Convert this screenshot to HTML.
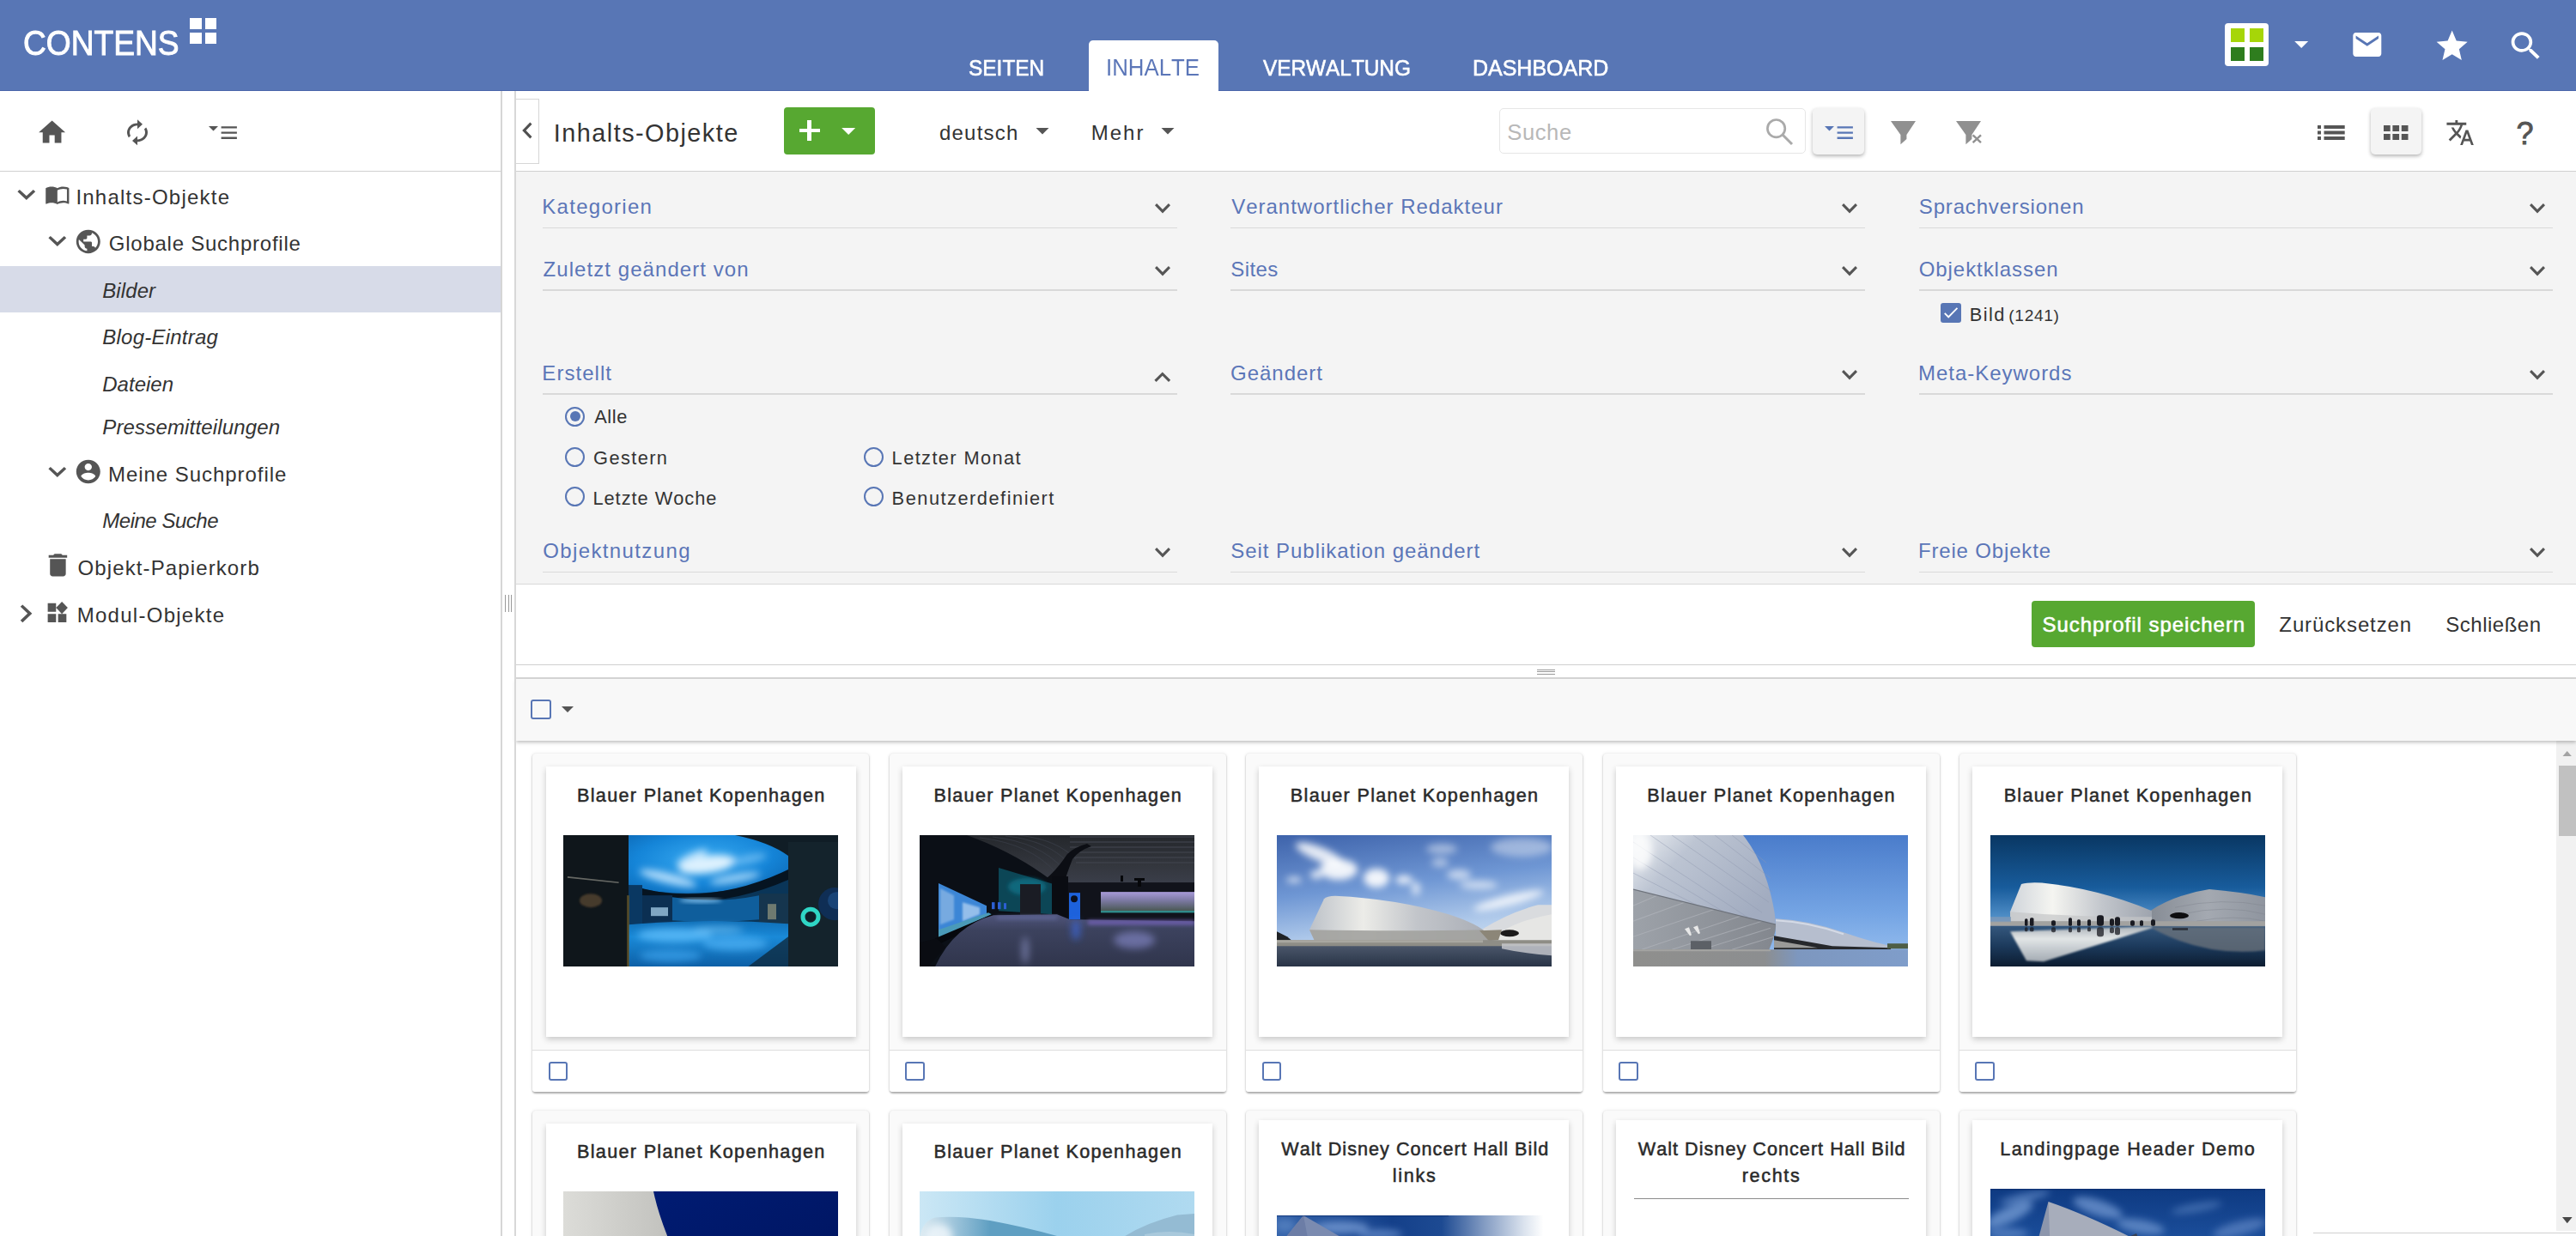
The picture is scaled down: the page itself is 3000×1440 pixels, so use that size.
<!DOCTYPE html>
<html lang="de"><head><meta charset="utf-8"><title>CONTENS</title>
<style>
html,body{margin:0;padding:0;}
body{width:3000px;height:1440px;overflow:hidden;position:relative;background:#fff;font-family:"Liberation Sans",sans-serif;}
body div, body svg{position:absolute;}
.t{white-space:nowrap;font-kerning:none;}
.c{text-align:center;}
</style></head><body>
<svg style="left:0;top:0;width:0;height:0" width="0" height="0"><defs>
<filter id="b1" x="-20%" y="-20%" width="140%" height="140%"><feGaussianBlur stdDeviation="1"/></filter>
<filter id="b2" x="-30%" y="-30%" width="160%" height="160%"><feGaussianBlur stdDeviation="2"/></filter>
<filter id="b4" x="-50%" y="-50%" width="200%" height="200%"><feGaussianBlur stdDeviation="4"/></filter>
<filter id="b7" x="-60%" y="-60%" width="220%" height="220%"><feGaussianBlur stdDeviation="7"/></filter>
<linearGradient id="i1floor" x1="0" y1="0" x2="0" y2="1"><stop offset="0" stop-color="#0f6fb8"/><stop offset=".35" stop-color="#1a8ad8"/><stop offset="1" stop-color="#0d5fa6"/></linearGradient>
<radialGradient id="i1ceil" cx=".5" cy=".55" r=".6"><stop offset="0" stop-color="#36a8f0"/><stop offset=".55" stop-color="#1585d8"/><stop offset="1" stop-color="#0a62ae"/></radialGradient>
<linearGradient id="i2floor" x1="0" y1="0" x2="0" y2="1"><stop offset="0" stop-color="#50557c"/><stop offset=".3" stop-color="#3c425e"/><stop offset="1" stop-color="#30354c"/></linearGradient>
<linearGradient id="i2aq" x1="0" y1="0" x2="0" y2="1"><stop offset="0" stop-color="#a89ad8"/><stop offset=".45" stop-color="#7a78a0"/><stop offset="1" stop-color="#46564e"/></linearGradient>
<linearGradient id="i2ceil" x1="0" y1="0" x2="0" y2="1"><stop offset="0" stop-color="#24272c"/><stop offset=".6" stop-color="#33363d"/><stop offset="1" stop-color="#3b3f4b"/></linearGradient>
<linearGradient id="i3sky" x1="0" y1="0" x2=".25" y2="1"><stop offset="0" stop-color="#3e63ab"/><stop offset=".45" stop-color="#6f97d4"/><stop offset=".8" stop-color="#b4cdec"/><stop offset="1" stop-color="#d2e0f2"/></linearGradient>
<linearGradient id="i3b" x1="0" y1="0" x2="1" y2="0"><stop offset="0" stop-color="#bcc1c8"/><stop offset=".3" stop-color="#ecece8"/><stop offset=".6" stop-color="#c2c5ca"/><stop offset="1" stop-color="#a9adb5"/></linearGradient>
<linearGradient id="i3w" x1="0" y1="0" x2="0" y2="1"><stop offset="0" stop-color="#4a566a"/><stop offset="1" stop-color="#283346"/></linearGradient>
<linearGradient id="i4sky" x1="0" y1="0" x2="0" y2="1"><stop offset="0" stop-color="#4a7ccb"/><stop offset=".6" stop-color="#75a5e4"/><stop offset="1" stop-color="#9cc2f0"/></linearGradient>
<linearGradient id="i4dome" x1="0" y1="0" x2="1" y2=".6"><stop offset="0" stop-color="#eef1f4"/><stop offset=".35" stop-color="#bcc4d2"/><stop offset="1" stop-color="#a2acc0"/></linearGradient>
<linearGradient id="i4band" x1="0" y1="0" x2="1" y2="0"><stop offset="0" stop-color="#9da2a9"/><stop offset="1" stop-color="#83878e"/></linearGradient>
<linearGradient id="i4base" x1="0" y1="0" x2="1" y2="0"><stop offset="0" stop-color="#8f8f8d"/><stop offset=".48" stop-color="#8c8e90"/><stop offset=".6" stop-color="#7d97bf"/><stop offset="1" stop-color="#7f9dca"/></linearGradient>
<linearGradient id="i5sky" x1="0" y1="0" x2="0" y2="1"><stop offset="0" stop-color="#093763"/><stop offset=".4" stop-color="#185c9c"/><stop offset=".68" stop-color="#5e9bd2"/><stop offset="1" stop-color="#5e9bd2"/></linearGradient>
<linearGradient id="i5b" x1="0" y1="0" x2="1" y2="0"><stop offset="0" stop-color="#cfd4da"/><stop offset=".3" stop-color="#f5f5f1"/><stop offset=".65" stop-color="#c2c6cc"/><stop offset="1" stop-color="#9ea4ae"/></linearGradient>
<linearGradient id="i5w" x1="0" y1="0" x2="0" y2="1"><stop offset="0" stop-color="#35587e"/><stop offset=".5" stop-color="#1c3a5c"/><stop offset="1" stop-color="#0c1c30"/></linearGradient>
<linearGradient id="i5r" x1="0" y1="0" x2="1" y2="0"><stop offset="0" stop-color="#868c95"/><stop offset=".5" stop-color="#a4a9b1"/><stop offset="1" stop-color="#8f959f"/></linearGradient>
<linearGradient id="i5refl" x1="0" y1="0" x2="0" y2="1"><stop offset="0" stop-color="#b9bdc0" stop-opacity=".9"/><stop offset=".35" stop-color="#eceeed" stop-opacity=".95"/><stop offset="1" stop-color="#c9cdd0" stop-opacity=".8"/></linearGradient>
<linearGradient id="i6g" x1="0" y1="0" x2="1" y2="0"><stop offset="0" stop-color="#dcdcd8"/><stop offset=".7" stop-color="#c4c4c0"/><stop offset="1" stop-color="#a2a2a0"/></linearGradient>
<linearGradient id="i6b" x1="0" y1="0" x2="1" y2="1"><stop offset="0" stop-color="#001d78"/><stop offset="1" stop-color="#00135a"/></linearGradient>
<linearGradient id="i7sky" x1="0" y1="0" x2="1" y2="0"><stop offset="0" stop-color="#cbe7f5"/><stop offset=".5" stop-color="#9bd1ed"/><stop offset="1" stop-color="#b0daf0"/></linearGradient>
<linearGradient id="i7b" x1="0" y1="0" x2="1" y2="0"><stop offset="0" stop-color="#dcebf2"/><stop offset=".2" stop-color="#a9cbdf"/><stop offset=".5" stop-color="#5f9fc2"/><stop offset="1" stop-color="#5f9fc2"/></linearGradient>
<linearGradient id="i8g" x1="0" y1="0" x2="1" y2="0"><stop offset="0" stop-color="#3463aa"/><stop offset=".42" stop-color="#14408a"/><stop offset=".6" stop-color="#1d4a92"/><stop offset=".75" stop-color="#8099c1"/><stop offset=".9" stop-color="#dbe3ee"/><stop offset=".97" stop-color="#ffffff"/></linearGradient>
<linearGradient id="i10sky" x1="0" y1="0" x2="0" y2="1"><stop offset="0" stop-color="#0e3a82"/><stop offset=".4" stop-color="#1c4f9c"/><stop offset="1" stop-color="#2c62ac"/></linearGradient>
</defs></svg>
<div style="left:0px;top:0px;width:3000px;height:106.2px;background:#5876b5;border-bottom:1.2px solid #4a65aa;box-sizing:border-box;"></div>
<div class="t" style="left:27.00px;top:26.37px;font-size:40.5px;line-height:48.6px;color:#fff;font-weight:400;letter-spacing:0.000px;-webkit-text-stroke:0.97px #fff;transform:scaleX(0.9167);transform-origin:0 0;">CONTENS</div>
<div style="left:221px;top:20.5px;width:13.5px;height:13px;background:#fff;"></div>
<div style="left:238.5px;top:20.5px;width:13.5px;height:13px;background:#fff;"></div>
<div style="left:221px;top:37.5px;width:13.5px;height:13px;background:#fff;"></div>
<div style="left:238.5px;top:37.5px;width:13.5px;height:13px;background:#fff;"></div>
<div style="left:1268px;top:47px;width:150.6px;height:60px;background:#fff;border-radius:5px 5px 0 0;"></div>
<div class="t" style="left:1128.21px;top:63.52px;font-size:26.5px;line-height:31.8px;color:#fff;font-weight:400;letter-spacing:0.000px;-webkit-text-stroke:0.64px #fff;transform:scaleX(0.9222);transform-origin:0 0;">SEITEN</div>
<div class="t" style="left:1288.12px;top:63.43px;font-size:26.8px;line-height:32.16px;color:#5b76b8;font-weight:400;letter-spacing:0.000px;transform:scaleX(0.9630);transform-origin:0 0;">INHALTE</div>
<div class="t" style="left:1471.21px;top:63.52px;font-size:26.5px;line-height:31.8px;color:#fff;font-weight:400;letter-spacing:0.000px;-webkit-text-stroke:0.64px #fff;transform:scaleX(0.9193);transform-origin:0 0;">VERWALTUNG</div>
<div class="t" style="left:1715.27px;top:63.52px;font-size:26.5px;line-height:31.8px;color:#fff;font-weight:400;letter-spacing:0.000px;-webkit-text-stroke:0.64px #fff;transform:scaleX(0.9425);transform-origin:0 0;">DASHBOARD</div>
<div style="left:2591px;top:26.5px;width:50.5px;height:50.5px;background:#fff;border-radius:4px;"></div>
<div style="left:2598px;top:33px;width:16px;height:16px;background:#a6d608;"></div>
<div style="left:2620px;top:33px;width:16px;height:16px;background:#a6d608;"></div>
<div style="left:2598px;top:55px;width:16px;height:16px;background:#2e7d1e;"></div>
<div style="left:2620px;top:55px;width:16px;height:16px;background:#2e7d1e;"></div>
<svg style="left:2660.80px;top:32.00px;width:38.40px;height:38.40px;" viewBox="0 0 24 24" preserveAspectRatio="none"><path fill="#fff" d="M7 10l5 5 5-5z" /></svg>
<svg style="left:2736.50px;top:31.00px;width:39.60px;height:42.00px;" viewBox="0 0 24 24" preserveAspectRatio="none"><path fill="#fff" d="M20 4H4c-1.1 0-1.99.9-1.99 2L2 18c0 1.1.9 2 2 2h16c1.1 0 2-.9 2-2V6c0-1.1-.9-2-2-2zm0 4l-8 5-8-5V6l8 5 8-5v2z" /></svg>
<svg style="left:2834.09px;top:32.09px;width:43.32px;height:43.33px;" viewBox="0 0 24 24" preserveAspectRatio="none"><path fill="#fff" d="M12 17.27L18.18 21l-1.64-7.03L22 9.24l-7.19-.61L12 2 9.19 8.63 2 9.24l5.46 4.73L5.82 21z" /></svg>
<svg style="left:2919.34px;top:32.33px;width:45.28px;height:42.95px;" viewBox="0 0 24 24" preserveAspectRatio="none"><path fill="#fff" d="M15.5 14h-.79l-.28-.27C15.41 12.59 16 11.11 16 9.5 16 5.91 13.09 3 9.5 3S3 5.91 3 9.5 5.91 16 9.5 16c1.61 0 3.09-.59 4.23-1.57l.27.28v.79l5 4.99L20.49 19l-4.99-5zm-6 0C7.01 14 5 11.99 5 9.5S7.01 5 9.5 5 14 7.01 14 9.5 11.99 14 9.5 14z" /></svg>
<div style="left:0px;top:106px;width:584px;height:1334px;background:#fff;"></div>
<div style="left:583.2px;top:106.2px;width:1.5px;height:1334px;background:#d6d6d6;"></div>
<div style="left:0px;top:198.5px;width:584px;height:1.5px;background:#d0d0d0;"></div>
<svg style="left:42.30px;top:136.41px;width:37.20px;height:36.71px;" viewBox="0 0 24 24" preserveAspectRatio="none"><path fill="#555" d="M10 20v-6h4v6h5v-8h3L12 3 2 12h3v8z" /></svg>
<svg style="left:142.00px;top:137.64px;width:36.00px;height:32.73px;" viewBox="0 0 24 24" preserveAspectRatio="none"><path fill="#555" d="M12 6v3l4-4-4-4v3c-4.42 0-8 3.58-8 8 0 1.57.46 3.03 1.24 4.26L6.7 14.8c-.45-.83-.7-1.79-.7-2.8 0-3.31 2.69-6 6-6zm6.76 1.74L17.3 9.2c.44.84.7 1.79.7 2.8 0 3.31-2.69 6-6 6v-3l-4 4 4 4v-3c4.42 0 8-3.58 8-8 0-1.57-.46-3.03-1.24-4.26z" /></svg>
<svg style="left:243px;top:145.7px;width:34px;height:17px;" viewBox="0 0 34 17"><path fill="#555" d="M0 1h11l-5.5 5.4zM14.6 1.3h18.3v2.3H14.6zM14.6 7.4h18.3v2.3H14.6zM14.6 13.6h18.3v2.3H14.6z"/></svg>
<div style="left:0px;top:310px;width:583px;height:53.8px;background:#d7dbe8;"></div>
<svg style="left:9.80px;top:206.69px;width:41.60px;height:38.87px;" viewBox="0 0 24 24" preserveAspectRatio="none"><path fill="#555" d="M16.59 8.59L12 13.17 7.41 8.59 6 10l6 6 6-6z" /></svg>
<svg style="left:51.96px;top:212.15px;width:29.67px;height:29.08px;" viewBox="0 0 24 24" preserveAspectRatio="none"><path fill="#555" d="M21 5c-1.11-.35-2.33-.5-3.5-.5-1.95 0-4.05.4-5.5 1.5-1.45-1.1-3.55-1.5-5.5-1.5S2.45 4.9 1 6v14.65c0 .25.25.5.5.5.1 0 .15-.05.25-.05C3.1 20.45 5.05 20 6.5 20c1.95 0 4.05.4 5.5 1.5 1.35-.85 3.8-1.5 5.5-1.5 1.65 0 3.35.3 4.75 1.05.1.05.15.05.25.05.25 0 .5-.25.5-.5V6c-.6-.45-1.25-.75-2-1zm0 13.5c-1.1-.35-2.3-.5-3.5-.5-1.7 0-4.15.65-5.5 1.5V8c1.35-.85 3.8-1.5 5.5-1.5 1.2 0 2.4.15 3.5.5v11.5z" /></svg>
<div class="t" style="left:88.39px;top:215.58px;font-size:24px;line-height:28.8px;color:#333;font-weight:400;letter-spacing:1.233px;">Inhalts-Objekte</div>
<svg style="left:46.00px;top:261.09px;width:41.60px;height:38.87px;" viewBox="0 0 24 24" preserveAspectRatio="none"><path fill="#555" d="M16.59 8.59L12 13.17 7.41 8.59 6 10l6 6 6-6z" /></svg>
<svg style="left:86.20px;top:264.86px;width:33.60px;height:32.88px;" viewBox="0 0 24 24" preserveAspectRatio="none"><path fill="#555" d="M12 2C6.48 2 2 6.48 2 12s4.48 10 10 10 10-4.48 10-10S17.52 2 12 2zm-1 17.93c-3.95-.49-7-3.85-7-7.93 0-.62.08-1.21.21-1.79L9 15v1c0 1.1.9 2 2 2v1.93zm6.9-2.54c-.26-.81-1-1.39-1.9-1.39h-1v-3c0-.55-.45-1-1-1H8v-2h2c.55 0 1-.45 1-1V7h2c1.1 0 2-.9 2-2v-.41c2.93 1.19 5 4.06 5 7.41 0 2.08-.8 3.97-2.1 5.39z" /></svg>
<div class="t" style="left:126.79px;top:269.98px;font-size:24px;line-height:28.8px;color:#333;font-weight:400;letter-spacing:0.756px;">Globale Suchprofile</div>
<div class="t" style="left:119.26px;top:325.18px;font-size:24px;line-height:28.8px;color:#333;font-weight:400;letter-spacing:0.094px;font-style:italic;">Bilder</div>
<div class="t" style="left:119.26px;top:379.08px;font-size:24px;line-height:28.8px;color:#333;font-weight:400;letter-spacing:0.234px;font-style:italic;">Blog-Eintrag</div>
<div class="t" style="left:119.26px;top:433.98px;font-size:24px;line-height:28.8px;color:#333;font-weight:400;letter-spacing:0.018px;font-style:italic;">Dateien</div>
<div class="t" style="left:119.26px;top:483.78px;font-size:24px;line-height:28.8px;color:#333;font-weight:400;letter-spacing:0.160px;font-style:italic;">Pressemitteilungen</div>
<svg style="left:46.00px;top:529.69px;width:41.60px;height:38.87px;" viewBox="0 0 24 24" preserveAspectRatio="none"><path fill="#555" d="M16.59 8.59L12 13.17 7.41 8.59 6 10l6 6 6-6z" /></svg>
<svg style="left:86.20px;top:532.94px;width:33.60px;height:33.12px;" viewBox="0 0 24 24" preserveAspectRatio="none"><path fill="#555" d="M12 2C6.48 2 2 6.48 2 12s4.48 10 10 10 10-4.48 10-10S17.52 2 12 2zm0 3c1.66 0 3 1.34 3 3s-1.34 3-3 3-3-1.34-3-3 1.34-3 3-3zm0 14.2c-2.5 0-4.71-1.28-6-3.22.03-1.99 4-3.08 6-3.08 1.99 0 5.97 1.09 6 3.08-1.29 1.94-3.5 3.22-6 3.22z" /></svg>
<div class="t" style="left:126.03px;top:538.58px;font-size:24px;line-height:28.8px;color:#333;font-weight:400;letter-spacing:0.952px;">Meine Suchprofile</div>
<div class="t" style="left:119.26px;top:592.98px;font-size:24px;line-height:28.8px;color:#333;font-weight:400;letter-spacing:-0.476px;font-style:italic;">Meine Suche</div>
<svg style="left:48.92px;top:641.15px;width:36.86px;height:34.80px;" viewBox="0 0 24 24" preserveAspectRatio="none"><path fill="#555" d="M6 19c0 1.1.9 2 2 2h8c1.1 0 2-.9 2-2V7H6v12zM19 4h-3.5l-1-1h-5l-1 1H5v2h14V4z" /></svg>
<div class="t" style="left:90.56px;top:647.78px;font-size:24px;line-height:28.8px;color:#333;font-weight:400;letter-spacing:1.114px;">Objekt-Papierkorb</div>
<svg style="left:8.03px;top:693.60px;width:44.05px;height:41.60px;" viewBox="0 0 24 24" preserveAspectRatio="none"><path fill="#555" d="M10 6L8.59 7.41 13.17 12l-4.58 4.59L10 18l6-6z" /></svg>
<svg style="left:52.38px;top:699.40px;width:28.94px;height:29.83px;" viewBox="0 0 24 24" preserveAspectRatio="none"><path fill="#555" d="M13 13v8h8v-8h-8zM3 21h8v-8H3v8zM3 3v8h8V3H3zm13.66-1.31L11 7.34 16.66 13l5.66-5.66-5.66-5.65z" /></svg>
<div class="t" style="left:89.73px;top:702.78px;font-size:24px;line-height:28.8px;color:#333;font-weight:400;letter-spacing:1.272px;">Modul-Objekte</div>
<div style="left:588px;top:693px;width:1.2px;height:20px;background:#999;"></div>
<div style="left:591.5px;top:693px;width:1.2px;height:20px;background:#999;"></div>
<div style="left:595px;top:693px;width:1.2px;height:20px;background:#999;"></div>
<div style="left:600px;top:106px;width:2400px;height:93px;background:#fff;"></div>
<div style="left:600px;top:198.5px;width:2400px;height:1.5px;background:#d0d0d0;"></div>
<div style="left:599.2px;top:106.2px;width:1.4px;height:1334px;background:#d8d8d8;z-index:7;"></div>
<div style="left:600px;top:114.5px;width:28.4px;height:76px;background:#fff;border:1.5px solid #d6d6d6;border-left:none;box-sizing:border-box;"></div>
<svg style="left:595.50px;top:132.80px;width:36.60px;height:38.00px;" viewBox="0 0 24 24" preserveAspectRatio="none"><path fill="#505050" d="M15.41 7.41L14 6l-6 6 6 6 1.41-1.41L10.83 12z" /></svg>
<div class="t" style="left:644.84px;top:138.44px;font-size:28.8px;line-height:34.56px;color:#333;font-weight:400;letter-spacing:1.481px;">Inhalts-Objekte</div>
<div style="left:913.4px;top:125.4px;width:106px;height:54.3px;background:#57a831;border-radius:4px;"></div>
<div style="left:930.5px;top:150.3px;width:24px;height:4.2px;background:#fff;"></div>
<div style="left:940.4px;top:140.4px;width:4.2px;height:24px;background:#fff;"></div>
<svg style="left:968.80px;top:133.00px;width:38.40px;height:38.40px;" viewBox="0 0 24 24" preserveAspectRatio="none"><path fill="#fff" d="M7 10l5 5 5-5z" /></svg>
<div class="t" style="left:1093.99px;top:140.98px;font-size:24px;line-height:28.8px;color:#333;font-weight:400;letter-spacing:1.201px;">deutsch</div>
<svg style="left:1195.50px;top:134.00px;width:36.00px;height:36.00px;" viewBox="0 0 24 24" preserveAspectRatio="none"><path fill="#555" d="M7 10l5 5 5-5z" /></svg>
<div class="t" style="left:1270.63px;top:140.98px;font-size:24px;line-height:28.8px;color:#333;font-weight:400;letter-spacing:2.029px;">Mehr</div>
<svg style="left:1342.00px;top:134.00px;width:36.00px;height:36.00px;" viewBox="0 0 24 24" preserveAspectRatio="none"><path fill="#555" d="M7 10l5 5 5-5z" /></svg>
<div style="left:1745.6px;top:126px;width:357.4px;height:53.4px;background:#fff;border:1.5px solid #e6e6e6;border-radius:5px;box-sizing:border-box;"></div>
<div class="t" style="left:1755.34px;top:138.67px;font-size:25.6px;line-height:30.72px;color:#b8b8b8;font-weight:400;letter-spacing:0.553px;">Suche</div>
<svg style="left:2055px;top:136px;width:36px;height:36px;" viewBox="0 0 36 36"><circle cx="13.6" cy="13.7" r="10.2" fill="none" stroke="#aaa" stroke-width="2.7"/><path d="M21 21L32 32" stroke="#aaa" stroke-width="3" fill="none"/></svg>
<div style="left:2111.3px;top:125.5px;width:60px;height:54.5px;background:#f4f4f4;border-radius:5px;box-shadow:0 2px 4px rgba(0,0,0,.3);"></div>
<svg style="left:2125px;top:145.7px;width:34px;height:17px;" viewBox="0 0 34 17"><path fill="#5876b5" d="M0 1h11l-5.5 5.4zM14.6 1.3h18.3v2.3H14.6zM14.6 7.4h18.3v2.3H14.6zM14.6 13.6h18.3v2.3H14.6z"/></svg>
<svg style="left:2202.2px;top:140.5px;width:30px;height:28px;" viewBox="0 0 30 28"><path fill="#909090" d="M0 0h29L18.4 16v5L11.4 27.2V16z"/></svg>
<svg style="left:2277.6px;top:140.5px;width:30px;height:28px;" viewBox="0 0 30 28"><path fill="#909090" d="M0 0h29L18.4 16v5L11.4 27.2V16z"/></svg>
<svg style="left:2295px;top:155px;width:14px;height:14px;" viewBox="0 0 14 14"><path d="M2.6 2.4L12 11.2M12 2.4L2.6 11.2" stroke="#909090" stroke-width="2.4" fill="none"/></svg>
<svg style="left:2699px;top:145.5px;width:32px;height:17.2px;" viewBox="0 0 32 17.2"><path fill="#555" d="M0 0h4v4.1H0zM0 6.5h4v4.1H0zM0 13h4v4.1H0zM7.5 0h24.2v4.1H7.5zM7.5 6.5h24.2v4.1H7.5zM7.5 13h24.2v4.1H7.5z"/></svg>
<div style="left:2760.6px;top:126px;width:59.4px;height:54px;background:#f4f4f4;border-radius:5px;box-shadow:0 2px 4px rgba(0,0,0,.3);"></div>
<svg style="left:2776px;top:145.5px;width:29px;height:17.2px;" viewBox="0 0 29 17.2"><path fill="#555" d="M0 0h7.7v6.9H0zM10.4 0h7.7v6.9h-7.7zM20.8 0h7.7v6.9h-7.7zM0 10h7.7v6.9H0zM10.4 10h7.7v6.9h-7.7zM20.8 10h7.7v6.9h-7.7z"/></svg>
<svg style="left:2848.17px;top:136.80px;width:34.25px;height:34.80px;" viewBox="0 0 24 24" preserveAspectRatio="none"><path fill="#555" d="M12.87 15.07l-2.54-2.51.03-.03c1.74-1.94 2.98-4.17 3.71-6.53H17V4h-7V2H8v2H1v1.99h11.17C11.5 7.92 10.44 9.75 9 11.35 8.07 10.32 7.3 9.19 6.69 8h-2c.73 1.63 1.73 3.17 2.98 4.56l-5.09 5.02L4 19l5-5 3.11 3.11.76-2.04zM18.5 10h-2L12 22h2l1.12-3h4.75L21 22h2l-4.5-12zm-2.62 7l1.62-4.33L19.12 17h-3.24z" /></svg>
<div class="t" style="left:2930.46px;top:133.93px;font-size:36px;line-height:43.2px;color:#555;font-weight:400;letter-spacing:0.000px;-webkit-text-stroke:0.86px #555;">?</div>
<div style="left:601px;top:200px;width:2399px;height:480px;background:#f4f4f4;"></div>
<div style="left:601px;top:679.5px;width:2399px;height:1.5px;background:#d8d8d8;"></div>
<div class="t" style="left:631.33px;top:226.98px;font-size:24px;line-height:28.8px;color:#5b76b8;font-weight:400;letter-spacing:1.271px;">Kategorien</div>
<div style="left:632px;top:264.5px;width:738.5px;height:1.8px;background:#d9d9d9;"></div>
<svg style="left:1335.50px;top:224.40px;width:36.00px;height:36.60px;" viewBox="0 0 24 24" preserveAspectRatio="none"><path fill="#555" d="M16.59 8.59L12 13.17 7.41 8.59 6 10l6 6 6-6z" /></svg>
<div class="t" style="left:632.54px;top:299.88px;font-size:24px;line-height:28.8px;color:#5b76b8;font-weight:400;letter-spacing:1.064px;">Zuletzt geändert von</div>
<div style="left:632px;top:337.4px;width:738.5px;height:1.8px;background:#d9d9d9;"></div>
<svg style="left:1335.50px;top:297.30px;width:36.00px;height:36.60px;" viewBox="0 0 24 24" preserveAspectRatio="none"><path fill="#555" d="M16.59 8.59L12 13.17 7.41 8.59 6 10l6 6 6-6z" /></svg>
<div class="t" style="left:631.33px;top:420.88px;font-size:24px;line-height:28.8px;color:#5b76b8;font-weight:400;letter-spacing:1.042px;">Erstellt</div>
<div style="left:632px;top:458.4px;width:738.5px;height:1.8px;background:#d9d9d9;"></div>
<svg style="left:1334.70px;top:421.08px;width:37.60px;height:37.25px;" viewBox="0 0 24 24" preserveAspectRatio="none"><path fill="#555" d="M12 8l-6 6 1.41 1.41L12 10.83l4.59 4.58L18 14z" /></svg>
<div class="t" style="left:632.16px;top:627.98px;font-size:24px;line-height:28.8px;color:#5b76b8;font-weight:400;letter-spacing:1.385px;">Objektnutzung</div>
<div style="left:632px;top:665.5px;width:738.5px;height:1.8px;background:#d9d9d9;"></div>
<svg style="left:1335.50px;top:625.40px;width:36.00px;height:36.60px;" viewBox="0 0 24 24" preserveAspectRatio="none"><path fill="#555" d="M16.59 8.59L12 13.17 7.41 8.59 6 10l6 6 6-6z" /></svg>
<div class="t" style="left:1434.19px;top:226.98px;font-size:24px;line-height:28.8px;color:#5b76b8;font-weight:400;letter-spacing:0.996px;">Verantwortlicher Redakteur</div>
<div style="left:1433px;top:264.5px;width:739px;height:1.8px;background:#d9d9d9;"></div>
<svg style="left:2136.30px;top:224.40px;width:36.00px;height:36.60px;" viewBox="0 0 24 24" preserveAspectRatio="none"><path fill="#555" d="M16.59 8.59L12 13.17 7.41 8.59 6 10l6 6 6-6z" /></svg>
<div class="t" style="left:1433.21px;top:299.88px;font-size:24px;line-height:28.8px;color:#5b76b8;font-weight:400;letter-spacing:0.425px;">Sites</div>
<div style="left:1433px;top:337.4px;width:739px;height:1.8px;background:#d9d9d9;"></div>
<svg style="left:2136.30px;top:297.30px;width:36.00px;height:36.60px;" viewBox="0 0 24 24" preserveAspectRatio="none"><path fill="#555" d="M16.59 8.59L12 13.17 7.41 8.59 6 10l6 6 6-6z" /></svg>
<div class="t" style="left:1433.09px;top:420.88px;font-size:24px;line-height:28.8px;color:#5b76b8;font-weight:400;letter-spacing:0.974px;">Geändert</div>
<div style="left:1433px;top:458.4px;width:739px;height:1.8px;background:#d9d9d9;"></div>
<svg style="left:2136.30px;top:418.30px;width:36.00px;height:36.60px;" viewBox="0 0 24 24" preserveAspectRatio="none"><path fill="#555" d="M16.59 8.59L12 13.17 7.41 8.59 6 10l6 6 6-6z" /></svg>
<div class="t" style="left:1433.21px;top:627.98px;font-size:24px;line-height:28.8px;color:#5b76b8;font-weight:400;letter-spacing:0.963px;">Seit Publikation geändert</div>
<div style="left:1433px;top:665.5px;width:739px;height:1.8px;background:#d9d9d9;"></div>
<svg style="left:2136.30px;top:625.40px;width:36.00px;height:36.60px;" viewBox="0 0 24 24" preserveAspectRatio="none"><path fill="#555" d="M16.59 8.59L12 13.17 7.41 8.59 6 10l6 6 6-6z" /></svg>
<div class="t" style="left:2234.81px;top:226.98px;font-size:24px;line-height:28.8px;color:#5b76b8;font-weight:400;letter-spacing:0.832px;">Sprachversionen</div>
<div style="left:2234.6px;top:264.5px;width:738.4000000000001px;height:1.8px;background:#d9d9d9;"></div>
<svg style="left:2937.20px;top:224.40px;width:36.00px;height:36.60px;" viewBox="0 0 24 24" preserveAspectRatio="none"><path fill="#555" d="M16.59 8.59L12 13.17 7.41 8.59 6 10l6 6 6-6z" /></svg>
<div class="t" style="left:2234.76px;top:299.88px;font-size:24px;line-height:28.8px;color:#5b76b8;font-weight:400;letter-spacing:0.921px;">Objektklassen</div>
<div style="left:2234.6px;top:337.4px;width:738.4000000000001px;height:1.8px;background:#d9d9d9;"></div>
<svg style="left:2937.20px;top:297.30px;width:36.00px;height:36.60px;" viewBox="0 0 24 24" preserveAspectRatio="none"><path fill="#555" d="M16.59 8.59L12 13.17 7.41 8.59 6 10l6 6 6-6z" /></svg>
<div class="t" style="left:2233.93px;top:420.88px;font-size:24px;line-height:28.8px;color:#5b76b8;font-weight:400;letter-spacing:0.984px;">Meta-Keywords</div>
<div style="left:2234.6px;top:458.4px;width:738.4000000000001px;height:1.8px;background:#d9d9d9;"></div>
<svg style="left:2937.20px;top:418.30px;width:36.00px;height:36.60px;" viewBox="0 0 24 24" preserveAspectRatio="none"><path fill="#555" d="M16.59 8.59L12 13.17 7.41 8.59 6 10l6 6 6-6z" /></svg>
<div class="t" style="left:2233.93px;top:627.98px;font-size:24px;line-height:28.8px;color:#5b76b8;font-weight:400;letter-spacing:0.840px;">Freie Objekte</div>
<div style="left:2234.6px;top:665.5px;width:738.4000000000001px;height:1.8px;background:#d9d9d9;"></div>
<svg style="left:2937.20px;top:625.40px;width:36.00px;height:36.60px;" viewBox="0 0 24 24" preserveAspectRatio="none"><path fill="#555" d="M16.59 8.59L12 13.17 7.41 8.59 6 10l6 6 6-6z" /></svg>
<div style="left:2260.2px;top:352.8px;width:23.6px;height:23.3px;background:#5876b5;border-radius:3px;"></div>
<svg style="left:2261.20px;top:353.29px;width:21.83px;height:22.37px;" viewBox="0 0 24 24" preserveAspectRatio="none"><path fill="#fff" d="M9 16.17L4.83 12l-1.42 1.41L9 19 21 7l-1.41-1.41z" /></svg>
<div class="t" style="left:2293.71px;top:353.77px;font-size:21.8px;line-height:26.16px;color:#333;font-weight:400;letter-spacing:1.447px;">Bild</div>
<div class="t" style="left:2339.31px;top:356.23px;font-size:19.2px;line-height:23.04px;color:#333;font-weight:400;letter-spacing:0.636px;">(1241)</div>
<div style="left:658.2px;top:473.7px;width:23px;height:23px;border:2.3px solid #5876b5;border-radius:50%;box-sizing:border-box;"></div>
<div style="left:663.7px;top:479.2px;width:12px;height:12px;background:#5876b5;border-radius:50%;"></div>
<div class="t" style="left:692.16px;top:473.27px;font-size:21.8px;line-height:26.16px;color:#333;font-weight:400;letter-spacing:0.653px;">Alle</div>
<div style="left:658.2px;top:520.8px;width:23px;height:23px;border:2.3px solid #5876b5;border-radius:50%;box-sizing:border-box;"></div>
<div class="t" style="left:691.10px;top:521.37px;font-size:21.8px;line-height:26.16px;color:#333;font-weight:400;letter-spacing:1.378px;">Gestern</div>
<div style="left:658.2px;top:567.4px;width:23px;height:23px;border:2.3px solid #5876b5;border-radius:50%;box-sizing:border-box;"></div>
<div class="t" style="left:690.41px;top:567.97px;font-size:21.8px;line-height:26.16px;color:#333;font-weight:400;letter-spacing:0.979px;">Letzte Woche</div>
<div style="left:1006.0px;top:520.8px;width:23px;height:23px;border:2.3px solid #5876b5;border-radius:50%;box-sizing:border-box;"></div>
<div class="t" style="left:1038.61px;top:521.37px;font-size:21.8px;line-height:26.16px;color:#333;font-weight:400;letter-spacing:1.396px;">Letzter Monat</div>
<div style="left:1006.0px;top:567.4px;width:23px;height:23px;border:2.3px solid #5876b5;border-radius:50%;box-sizing:border-box;"></div>
<div class="t" style="left:1038.61px;top:567.97px;font-size:21.8px;line-height:26.16px;color:#333;font-weight:400;letter-spacing:1.502px;">Benutzerdefiniert</div>
<div style="left:601px;top:681px;width:2399px;height:93px;background:#fff;"></div>
<div style="left:2366.4px;top:700.3px;width:259.4px;height:53.8px;background:#57a831;border-radius:4px;"></div>
<div class="t" style="left:2378.50px;top:713.58px;font-size:24px;line-height:28.8px;color:#fff;font-weight:400;letter-spacing:0.959px;-webkit-text-stroke:0.58px #fff;">Suchprofil speichern</div>
<div class="t" style="left:2654.34px;top:713.58px;font-size:24px;line-height:28.8px;color:#333;font-weight:400;letter-spacing:0.887px;">Zurücksetzen</div>
<div class="t" style="left:2848.31px;top:713.58px;font-size:24px;line-height:28.8px;color:#333;font-weight:400;letter-spacing:0.503px;">Schließen</div>
<div style="left:601px;top:773.5px;width:2399px;height:1.5px;background:#d0d0d0;"></div>
<div style="left:601px;top:775px;width:2399px;height:14px;background:#fff;"></div>
<div style="left:1790px;top:779.5px;width:21px;height:1px;background:#999;"></div>
<div style="left:1790px;top:782px;width:21px;height:1px;background:#999;"></div>
<div style="left:1790px;top:784.5px;width:21px;height:1px;background:#999;"></div>
<div style="left:601px;top:789px;width:2399px;height:1.5px;background:#d8d8d8;"></div>
<div style="left:601px;top:790.5px;width:2399px;height:72.5px;background:#f8f8f8;box-shadow:0 2px 4px rgba(0,0,0,.25);z-index:5;"></div>
<div style="left:618.4px;top:815px;width:23.4px;height:23.3px;border:2.4px solid #5876b5;border-radius:3px;box-sizing:border-box;z-index:6;"></div>
<svg style="left:654px;top:823px;width:14px;height:7px;z-index:6" viewBox="0 0 10 5"><path d="M0 0h10L5 5z" fill="#555"/></svg>
<div style="left:601px;top:863px;width:2399px;height:577px;background:#fff;overflow:hidden;" id="grid">
<div style="left:19.3px;top:15.0px;width:392px;height:393.5px;background:#fafafa;border-radius:4px;box-shadow:0 1.5px 2px rgba(0,0,0,.3),0 0 4px rgba(0,0,0,.09);">
<div style="left:15.3px;top:15.3px;width:361px;height:315px;background:#fff;box-shadow:0 3px 7px rgba(0,0,0,.2);"></div>
<div style="left:0;top:345px;width:392px;height:48.5px;background:#fff;border-top:1.5px solid #ddd;box-sizing:border-box;border-radius:0 0 3px 3px;"></div>
<div style="left:18.5px;top:358.5px;width:22.5px;height:22.5px;border:2.4px solid #5876b5;border-radius:3px;box-sizing:border-box;"></div>
<div class="t" style="left:51.74px;top:35.76px;font-size:21.6px;line-height:25.92px;color:#2a2a2a;font-weight:400;letter-spacing:1.311px;-webkit-text-stroke:0.52px #2a2a2a;">Blauer Planet Kopenhagen</div>
<div style="left:35.8px;top:94.9px;width:320px;height:153.3px;overflow:hidden;"><svg style="left:0;top:0;width:320px;height:153.3px" viewBox="0 0 320 153" preserveAspectRatio="none">
<rect width="320" height="153" fill="#0d1a22"/>
<rect x="76" y="0" width="186" height="153" fill="#0a3558"/>
<ellipse cx="163" cy="22" rx="120" ry="45" fill="url(#i1ceil)" transform="rotate(-4 163 22)"/>
<rect x="0" y="0" width="76" height="153" fill="#0f161b"/>
<path d="M262 0H320V153H262z" fill="#14232c"/>
<path d="M180 0H320V8L262 8L262 24Q240 8 200 0z" fill="#101d26"/>
<g filter="url(#b4)"><ellipse cx="168" cy="34" rx="34" ry="10" fill="#e6f5ff" opacity=".95" transform="rotate(-8 168 34)"/><ellipse cx="150" cy="26" rx="20" ry="5" fill="#d4eeff" opacity=".8" transform="rotate(-25 150 26)"/><ellipse cx="122" cy="50" rx="34" ry="6" fill="#c4e6ff" opacity=".85" transform="rotate(14 122 50)"/><ellipse cx="200" cy="50" rx="30" ry="5" fill="#b4defd" opacity=".8" transform="rotate(-10 200 50)"/><ellipse cx="215" cy="28" rx="22" ry="5" fill="#7cc4f6" opacity=".7" transform="rotate(-12 215 28)"/></g>
<path d="M84 60Q170 84 262 40V52Q170 92 84 68z" fill="#061421"/>
<path d="M76 58H92V104H76z" fill="#0a3862"/>
<rect x="92" y="70" width="35" height="34" fill="#0b2f52"/>
<rect x="102" y="84" width="20" height="10" fill="#9cc4e0" opacity=".8"/>
<path d="M127 72Q178 80 228 70V98Q178 103 127 99z" fill="#0f5e9c"/>
<g filter="url(#b2)"><ellipse cx="160" cy="76" rx="25" ry="2.5" fill="#8cc8f4" opacity=".8"/></g>
<rect x="228" y="68" width="34" height="36" fill="#15354e"/>
<rect x="238" y="80" width="10" height="18" fill="#6e7a70"/>
<path d="M76 104Q170 96 262 103V153H76z" fill="url(#i1floor)"/>
<g filter="url(#b4)"><ellipse cx="130" cy="116" rx="44" ry="8" fill="#5bbaf8" opacity=".85"/><ellipse cx="200" cy="126" rx="38" ry="8" fill="#4aaef2" opacity=".8"/><ellipse cx="125" cy="140" rx="36" ry="7" fill="#3ba0ea" opacity=".75"/><ellipse cx="180" cy="110" rx="30" ry="4" fill="#7fcaf9" opacity=".6"/></g><path d="M262 118L262 153H215z" fill="#0e2a40" opacity=".8"/>
<rect x="74" y="70" width="3" height="83" fill="#6a5a2a" opacity=".7"/>
<circle cx="288" cy="95" r="9" fill="none" stroke="#2fd6c6" stroke-width="5"/>
<circle cx="288" cy="95" r="5" fill="#0d2029"/>
<circle cx="316" cy="80" r="19" fill="#0f2e55"/><circle cx="318" cy="76" r="10" fill="#1c4a80" opacity=".8"/>
<g fill="#8c8c84" opacity=".7"><rect x="5" y="48" width="60" height="1.6" transform="rotate(6 5 48)"/></g>
<g filter="url(#b1)"><ellipse cx="32" cy="76" rx="13" ry="8" fill="#5a4630" opacity=".75"/></g>
</svg></div>
</div>
<div style="left:434.7px;top:15.0px;width:392px;height:393.5px;background:#fafafa;border-radius:4px;box-shadow:0 1.5px 2px rgba(0,0,0,.3),0 0 4px rgba(0,0,0,.09);">
<div style="left:15.3px;top:15.3px;width:361px;height:315px;background:#fff;box-shadow:0 3px 7px rgba(0,0,0,.2);"></div>
<div style="left:0;top:345px;width:392px;height:48.5px;background:#fff;border-top:1.5px solid #ddd;box-sizing:border-box;border-radius:0 0 3px 3px;"></div>
<div style="left:18.5px;top:358.5px;width:22.5px;height:22.5px;border:2.4px solid #5876b5;border-radius:3px;box-sizing:border-box;"></div>
<div class="t" style="left:51.74px;top:35.76px;font-size:21.6px;line-height:25.92px;color:#2a2a2a;font-weight:400;letter-spacing:1.311px;-webkit-text-stroke:0.52px #2a2a2a;">Blauer Planet Kopenhagen</div>
<div style="left:35.8px;top:94.9px;width:320px;height:153.3px;overflow:hidden;"><svg style="left:0;top:0;width:320px;height:153.3px" viewBox="0 0 320 153" preserveAspectRatio="none">
<rect width="320" height="153" fill="#0b0f16"/>
<path d="M55 0H320V58H170L150 50Q110 20 55 0z" fill="url(#i2ceil)"/>
<g stroke="#40444e" stroke-width="1.6" opacity=".8"><path d="M175 8H320M175 14H320M178 20H320M180 26H320M182 32H320M175 2H320"/></g>
<g stroke="#3a3e48" stroke-width="1.2" fill="none" opacity=".7"><path d="M70 3Q130 10 160 45M85 2Q140 8 168 40M100 1Q150 6 175 34M115 0Q160 5 182 28"/></g>
<path d="M148 50Q160 40 172 22Q180 14 195 10L200 13Q185 18 178 28Q170 48 168 58z" fill="#0c0e14"/>
<path d="M92 38L156 57V92L92 88z" fill="#0c4656"/>
<g filter="url(#b2)"><ellipse cx="125" cy="60" rx="22" ry="10" fill="#117086" opacity=".8"/></g>
<rect x="117" y="57" width="24" height="36" fill="#1a1c24"/>
<rect x="154" y="48" width="19" height="52" fill="#0a0c12"/>
<rect x="173" y="55" width="147" height="46" fill="#11131b"/>
<path d="M22 56L78 82V93L22 116z" fill="#3c86d6"/>
<g filter="url(#b1)"><path d="M24 62L40 70V98L24 104z" fill="#a8c8ea" opacity=".55"/><path d="M50 78L70 84V92L50 100z" fill="#cfe2f6" opacity=".6"/></g>
<path d="M22 110L80 90L84 92L22 120z" fill="#4a9ab8"/>
<path d="M18 120L84 92L88 95L20 128z" fill="#06080c"/>
<g fill="#2c5fd2"><rect x="84" y="78" width="3.5" height="8"/><rect x="91" y="78" width="3.5" height="8"/><rect x="98" y="79" width="3" height="7"/></g>
<path d="M18 153Q40 105 86 93L160 92L175 98L320 100V153z" fill="url(#i2floor)"/>
<path d="M0 125L20 120L30 130L10 153H0z" fill="#0a0c12"/>
<g filter="url(#b2)"><rect x="196" y="99" width="124" height="5" fill="#7462b8" opacity=".85"/><rect x="90" y="94" width="70" height="4" fill="#6a70a8" opacity=".6"/></g>
<rect x="174" y="67" width="13" height="31" fill="#1d62dc"/><circle cx="180" cy="74" r="4" fill="#0a1020"/>
<g filter="url(#b4)"><ellipse cx="182" cy="110" rx="5" ry="12" fill="#3a6ae0" opacity=".7"/><ellipse cx="250" cy="122" rx="24" ry="10" fill="#8a8ed0" opacity=".6"/><ellipse cx="123" cy="134" rx="4" ry="16" fill="#9aa2d8" opacity=".55"/></g>
<rect x="211" y="66" width="109" height="23" fill="url(#i2aq)"/>
<rect x="211" y="88" width="109" height="2.2" fill="#2f9090"/>
<rect x="234" y="47" width="3" height="7" fill="#06070a"/><path d="M250 50H262V53H258V60H254V53H250z" fill="#06070a"/>
</svg></div>
</div>
<div style="left:850.1px;top:15.0px;width:392px;height:393.5px;background:#fafafa;border-radius:4px;box-shadow:0 1.5px 2px rgba(0,0,0,.3),0 0 4px rgba(0,0,0,.09);">
<div style="left:15.3px;top:15.3px;width:361px;height:315px;background:#fff;box-shadow:0 3px 7px rgba(0,0,0,.2);"></div>
<div style="left:0;top:345px;width:392px;height:48.5px;background:#fff;border-top:1.5px solid #ddd;box-sizing:border-box;border-radius:0 0 3px 3px;"></div>
<div style="left:18.5px;top:358.5px;width:22.5px;height:22.5px;border:2.4px solid #5876b5;border-radius:3px;box-sizing:border-box;"></div>
<div class="t" style="left:51.74px;top:35.76px;font-size:21.6px;line-height:25.92px;color:#2a2a2a;font-weight:400;letter-spacing:1.311px;-webkit-text-stroke:0.52px #2a2a2a;">Blauer Planet Kopenhagen</div>
<div style="left:35.8px;top:94.9px;width:320px;height:153.3px;overflow:hidden;"><svg style="left:0;top:0;width:320px;height:153.3px" viewBox="0 0 320 153" preserveAspectRatio="none">
<rect width="320" height="153" fill="url(#i3sky)"/>
<g filter="url(#b4)" fill="#fff">
<ellipse cx="50" cy="22" rx="30" ry="8" opacity=".85" transform="rotate(22 50 22)"/>
<ellipse cx="72" cy="40" rx="22" ry="12" opacity=".9"/>
<ellipse cx="116" cy="50" rx="15" ry="11" opacity=".9"/>
<ellipse cx="148" cy="52" rx="10" ry="5" opacity=".85"/>
<ellipse cx="162" cy="62" rx="5" ry="8" opacity=".7"/>
<ellipse cx="20" cy="52" rx="9" ry="3" opacity=".8"/><ellipse cx="46" cy="46" rx="7" ry="5" opacity=".8"/>
<ellipse cx="192" cy="16" rx="18" ry="6" opacity=".45"/><ellipse cx="190" cy="32" rx="10" ry="5" opacity=".5"/>
<ellipse cx="212" cy="46" rx="14" ry="6" opacity=".6"/><ellipse cx="235" cy="58" rx="22" ry="5" opacity=".6"/>
<ellipse cx="270" cy="76" rx="42" ry="6" opacity=".8" transform="rotate(-14 270 76)"/>
<ellipse cx="285" cy="14" rx="36" ry="11" opacity=".4"/>
</g>
<path d="M0 112L12 118L18 123H0z" fill="#1f2226"/>
<path d="M238 110Q270 90 304 81H320V132L250 126z" fill="#d9dbde"/>
<path d="M262 112Q285 98 320 92V132L250 126z" fill="#e6e6e4"/>
<path d="M38 110L55 74Q58 70.5 68 70.5Q140 74 200 92Q228 101 240 110L247 123H44z" fill="url(#i3b)"/>
<path d="M38 110Q150 112 240 110L247 123H44z" fill="#a2a29f" opacity=".9"/>
<ellipse cx="271" cy="114" rx="11" ry="4" fill="#1b1a1a"/>
<path d="M236 111L262 110L258 122L247 123z" fill="#8c8678"/>
<rect x="0" y="122" width="320" height="8" fill="#8e8d86"/>
<rect x="0" y="122" width="240" height="3" fill="#a8a7a0"/>
<rect x="0" y="129" width="320" height="24" fill="url(#i3w)"/>
<path d="M262 126L320 126V140Q290 138 262 132z" fill="#c9cbd0" opacity=".8"/>
</svg></div>
</div>
<div style="left:1265.5px;top:15.0px;width:392px;height:393.5px;background:#fafafa;border-radius:4px;box-shadow:0 1.5px 2px rgba(0,0,0,.3),0 0 4px rgba(0,0,0,.09);">
<div style="left:15.3px;top:15.3px;width:361px;height:315px;background:#fff;box-shadow:0 3px 7px rgba(0,0,0,.2);"></div>
<div style="left:0;top:345px;width:392px;height:48.5px;background:#fff;border-top:1.5px solid #ddd;box-sizing:border-box;border-radius:0 0 3px 3px;"></div>
<div style="left:18.5px;top:358.5px;width:22.5px;height:22.5px;border:2.4px solid #5876b5;border-radius:3px;box-sizing:border-box;"></div>
<div class="t" style="left:51.74px;top:35.76px;font-size:21.6px;line-height:25.92px;color:#2a2a2a;font-weight:400;letter-spacing:1.311px;-webkit-text-stroke:0.52px #2a2a2a;">Blauer Planet Kopenhagen</div>
<div style="left:35.8px;top:94.9px;width:320px;height:153.3px;overflow:hidden;"><svg style="left:0;top:0;width:320px;height:153.3px" viewBox="0 0 320 153" preserveAspectRatio="none">
<rect width="320" height="153" fill="url(#i4sky)"/>
<path d="M166 97Q205 99 245 113Q280 125 302 129V132H166z" fill="#b6bece"/>
<path d="M166 99Q205 101 245 115" stroke="#d4dae6" stroke-width="2" fill="none"/>
<path d="M164 117L232 129L300 131V133H164z" fill="#26282c"/>
<path d="M164 122L215 131H164z" fill="#9a9a98"/>
<rect x="296" y="126" width="24" height="6" fill="#4e5e46"/>
<path d="M0 0H128Q150 28 160 68Q166 92 166 106L0 64z" fill="url(#i4dome)"/>
<g stroke="#8e98ae" stroke-width=".8" opacity=".55" fill="none"><path d="M20 0L150 90M45 0L158 78M70 0L162 66M95 0L160 50M0 8L140 100M0 26L120 98M0 44L95 92M115 0L155 32"/></g>
<g filter="url(#b4)"><ellipse cx="8" cy="18" rx="14" ry="22" fill="#fff" opacity=".8"/></g>
<path d="M0 63L166 104Q167 112 158 134L0 134z" fill="url(#i4band)"/>
<g stroke="#b4b8be" stroke-width="1.1" opacity=".6" fill="none"><path d="M0 100L60 78M0 118L95 86M10 133L125 94M45 133L150 100M80 133L160 108M115 133L164 118M0 82L28 70"/></g>
<path d="M0 63L166 104" stroke="#6e737c" stroke-width="1.2"/>
<rect x="67" y="123" width="24" height="10" fill="#5c6066"/>
<path d="M60 109l5-2 3 9-2 1zM70 107l5-2 3 9-2 1z" fill="#e8e8e8"/>
<rect x="0" y="133" width="320" height="20" fill="url(#i4base)"/>
<rect x="0" y="133" width="160" height="2" fill="#a4a4a2"/>
</svg></div>
</div>
<div style="left:1680.9px;top:15.0px;width:392px;height:393.5px;background:#fafafa;border-radius:4px;box-shadow:0 1.5px 2px rgba(0,0,0,.3),0 0 4px rgba(0,0,0,.09);">
<div style="left:15.3px;top:15.3px;width:361px;height:315px;background:#fff;box-shadow:0 3px 7px rgba(0,0,0,.2);"></div>
<div style="left:0;top:345px;width:392px;height:48.5px;background:#fff;border-top:1.5px solid #ddd;box-sizing:border-box;border-radius:0 0 3px 3px;"></div>
<div style="left:18.5px;top:358.5px;width:22.5px;height:22.5px;border:2.4px solid #5876b5;border-radius:3px;box-sizing:border-box;"></div>
<div class="t" style="left:51.74px;top:35.76px;font-size:21.6px;line-height:25.92px;color:#2a2a2a;font-weight:400;letter-spacing:1.311px;-webkit-text-stroke:0.52px #2a2a2a;">Blauer Planet Kopenhagen</div>
<div style="left:35.8px;top:94.9px;width:320px;height:153.3px;overflow:hidden;"><svg style="left:0;top:0;width:320px;height:153.3px" viewBox="0 0 320 153" preserveAspectRatio="none">
<rect width="320" height="153" fill="url(#i5sky)"/>
<rect x="0" y="105" width="320" height="48" fill="url(#i5w)"/>
<path d="M186 88Q215 69 255 63Q290 66 320 72V106H186z" fill="url(#i5r)"/>
<g stroke="#7c828c" stroke-width=".7" opacity=".6" fill="none"><path d="M215 84Q270 72 320 82M222 92Q275 80 320 92M240 100Q285 92 320 100"/></g>
<path d="M23 89L36 57Q44 54.5 60 55.5Q125 62 188 88V102H23z" fill="url(#i5b)"/>
<path d="M23 89Q110 96 188 95V102H23z" fill="#c4c6c8" opacity=".7"/>
<rect x="0" y="100" width="320" height="5.5" fill="#a2a2a0"/>
<rect x="0" y="95" width="24" height="6" fill="#7f98b6" opacity=".8"/>
<ellipse cx="220" cy="93.5" rx="11" ry="3.6" fill="#0e0e10"/>
<g filter="url(#b1)"><path d="M23 112L188 106V108L62 147L42 146z" fill="url(#i5refl)"/><path d="M188 107H320V134Q250 142 188 108z" fill="#6d737b" opacity=".75"/></g>
<g fill="#1a1b22"><rect x="40" y="97" width="3.5" height="8.500" rx="1.5"/><rect x="46" y="96" width="4.500" height="9.500" rx="1.5"/><rect x="71" y="99" width="5" height="6.500" rx="2"/><rect x="91" y="96" width="4" height="9.500" rx="1.5"/><rect x="101" y="98" width="4" height="7.500" rx="1.5"/><rect x="113" y="98" width="4" height="7.500" rx="1.5"/><rect x="124" y="93" width="8" height="12.500" rx="3"/><rect x="139" y="97" width="5" height="8.500" rx="2"/><rect x="145" y="95" width="6" height="10.500" rx="2.500"/><rect x="163" y="99" width="5" height="6.500" rx="2"/><rect x="174" y="99" width="4" height="6.500" rx="1.5"/><rect x="187" y="98" width="5" height="7.500" rx="2"/>
<g opacity=".75"><rect x="40" y="107" width="3.500" height="5" rx="1.5"/><rect x="46" y="107" width="4.500" height="5" rx="1.5"/><rect x="71" y="107" width="5" height="6" rx="2"/><rect x="91" y="107" width="4" height="6" rx="1.5"/><rect x="101" y="107" width="4" height="6" rx="1.5"/><rect x="113" y="107" width="4" height="5" rx="1.5"/><rect x="124" y="107" width="8" height="11" rx="3"/><rect x="139" y="107" width="5" height="7" rx="2"/><rect x="145" y="107" width="6" height="9" rx="2.500"/><rect x="212" y="108" width="18" height="2.500"/></g></g>
</svg></div>
</div>
<div style="left:19.3px;top:430.5px;width:392px;height:393.5px;background:#fafafa;border-radius:4px;box-shadow:0 1.5px 2px rgba(0,0,0,.3),0 0 4px rgba(0,0,0,.09);">
<div style="left:15.3px;top:15.3px;width:361px;height:315px;background:#fff;box-shadow:0 3px 7px rgba(0,0,0,.2);"></div>
<div style="left:0;top:345px;width:392px;height:48.5px;background:#fff;border-top:1.5px solid #ddd;box-sizing:border-box;border-radius:0 0 3px 3px;"></div>
<div style="left:18.5px;top:358.5px;width:22.5px;height:22.5px;border:2.4px solid #5876b5;border-radius:3px;box-sizing:border-box;"></div>
<div class="t" style="left:51.74px;top:35.76px;font-size:21.6px;line-height:25.92px;color:#2a2a2a;font-weight:400;letter-spacing:1.311px;-webkit-text-stroke:0.52px #2a2a2a;">Blauer Planet Kopenhagen</div>
<div style="left:35.8px;top:94.9px;width:320px;height:153.3px;overflow:hidden;"><svg style="left:0;top:0;width:320px;height:153.3px" viewBox="0 0 320 153" preserveAspectRatio="none">
<rect width="320" height="153" fill="url(#i6b)"/>
<path d="M0 0H105Q110 24 122 54Q140 95 160 153H0z" fill="url(#i6g)"/>
</svg></div>
</div>
<div style="left:434.7px;top:430.5px;width:392px;height:393.5px;background:#fafafa;border-radius:4px;box-shadow:0 1.5px 2px rgba(0,0,0,.3),0 0 4px rgba(0,0,0,.09);">
<div style="left:15.3px;top:15.3px;width:361px;height:315px;background:#fff;box-shadow:0 3px 7px rgba(0,0,0,.2);"></div>
<div style="left:0;top:345px;width:392px;height:48.5px;background:#fff;border-top:1.5px solid #ddd;box-sizing:border-box;border-radius:0 0 3px 3px;"></div>
<div style="left:18.5px;top:358.5px;width:22.5px;height:22.5px;border:2.4px solid #5876b5;border-radius:3px;box-sizing:border-box;"></div>
<div class="t" style="left:51.74px;top:35.76px;font-size:21.6px;line-height:25.92px;color:#2a2a2a;font-weight:400;letter-spacing:1.311px;-webkit-text-stroke:0.52px #2a2a2a;">Blauer Planet Kopenhagen</div>
<div style="left:35.8px;top:94.9px;width:320px;height:153.3px;overflow:hidden;"><svg style="left:0;top:0;width:320px;height:153.3px" viewBox="0 0 320 153" preserveAspectRatio="none">
<rect width="320" height="153" fill="url(#i7sky)"/>
<path d="M0 54Q3 35 18 30.500Q45 28 82 34Q125 42 164 53V153H0z" fill="url(#i7b)"/>
<g filter="url(#b4)"><ellipse cx="22" cy="52" rx="16" ry="14" fill="#eef6fa" opacity=".85"/></g>
<path d="M236 54Q262 37 300 27.500L320 26V153H236z" fill="#94bbd3"/>
<path d="M262 50Q290 44 320 50V153H262z" fill="#a9c9dc"/>
</svg></div>
</div>
<div style="left:850.1px;top:430.5px;width:392px;height:393.5px;background:#fafafa;border-radius:4px;box-shadow:0 1.5px 2px rgba(0,0,0,.3),0 0 4px rgba(0,0,0,.09);">
<div style="left:15.3px;top:11.3px;width:361px;height:323px;background:#fff;box-shadow:0 3px 7px rgba(0,0,0,.2);"></div>
<div style="left:0;top:345px;width:392px;height:48.5px;background:#fff;border-top:1.5px solid #ddd;box-sizing:border-box;border-radius:0 0 3px 3px;"></div>
<div style="left:18.5px;top:358.5px;width:22.5px;height:22.5px;border:2.4px solid #5876b5;border-radius:3px;box-sizing:border-box;"></div>
<div class="t" style="left:41.26px;top:32.66px;font-size:21.6px;line-height:25.92px;color:#2a2a2a;font-weight:400;letter-spacing:1.031px;-webkit-text-stroke:0.52px #2a2a2a;">Walt Disney Concert Hall Bild</div>
<div class="t" style="left:170.75px;top:63.76px;font-size:21.6px;line-height:25.92px;color:#2a2a2a;font-weight:400;letter-spacing:1.702px;-webkit-text-stroke:0.52px #2a2a2a;">links</div>
<div style="left:35.8px;top:122.5px;width:320px;height:153.3px;overflow:hidden;"><svg style="left:0;top:0;width:320px;height:153.3px" viewBox="0 0 320 153" preserveAspectRatio="none">
<rect width="320" height="153" fill="url(#i8g)"/>
<g filter="url(#b4)"><ellipse cx="75" cy="14" rx="32" ry="7" fill="#7095cf" opacity=".85"/><ellipse cx="120" cy="22" rx="26" ry="6" fill="#6088c6" opacity=".8"/><ellipse cx="10" cy="12" rx="12" ry="8" fill="#5d86c4" opacity=".7"/></g>
<path d="M31 0L76 26H10z" fill="#7b8bb0"/>
<path d="M31 0L10 26H36z" fill="#6c7da6"/>
<rect x="0" y="0" width="200" height="1.2" fill="#0e2f6e" opacity=".6"/>
</svg></div>
</div>
<div style="left:1265.5px;top:430.5px;width:392px;height:393.5px;background:#fafafa;border-radius:4px;box-shadow:0 1.5px 2px rgba(0,0,0,.3),0 0 4px rgba(0,0,0,.09);">
<div style="left:15.3px;top:11.3px;width:361px;height:323px;background:#fff;box-shadow:0 3px 7px rgba(0,0,0,.2);"></div>
<div style="left:0;top:345px;width:392px;height:48.5px;background:#fff;border-top:1.5px solid #ddd;box-sizing:border-box;border-radius:0 0 3px 3px;"></div>
<div style="left:18.5px;top:358.5px;width:22.5px;height:22.5px;border:2.4px solid #5876b5;border-radius:3px;box-sizing:border-box;"></div>
<div class="t" style="left:41.26px;top:32.66px;font-size:21.6px;line-height:25.92px;color:#2a2a2a;font-weight:400;letter-spacing:1.031px;-webkit-text-stroke:0.52px #2a2a2a;">Walt Disney Concert Hall Bild</div>
<div class="t" style="left:162.32px;top:63.76px;font-size:21.6px;line-height:25.92px;color:#2a2a2a;font-weight:400;letter-spacing:1.615px;-webkit-text-stroke:0.52px #2a2a2a;">rechts</div>
<div style="left:36.5px;top:102.3px;width:320px;height:1.7px;background:#8c8c8c;"></div>
</div>
<div style="left:1680.9px;top:430.5px;width:392px;height:393.5px;background:#fafafa;border-radius:4px;box-shadow:0 1.5px 2px rgba(0,0,0,.3),0 0 4px rgba(0,0,0,.09);">
<div style="left:15.3px;top:11.700000000000001px;width:361px;height:322.2px;background:#fff;box-shadow:0 3px 7px rgba(0,0,0,.2);"></div>
<div style="left:0;top:345px;width:392px;height:48.5px;background:#fff;border-top:1.5px solid #ddd;box-sizing:border-box;border-radius:0 0 3px 3px;"></div>
<div style="left:18.5px;top:358.5px;width:22.5px;height:22.5px;border:2.4px solid #5876b5;border-radius:3px;box-sizing:border-box;"></div>
<div class="t" style="left:47.34px;top:32.16px;font-size:21.6px;line-height:25.92px;color:#2a2a2a;font-weight:400;letter-spacing:1.421px;-webkit-text-stroke:0.52px #2a2a2a;">Landingpage Header Demo</div>
<div style="left:35.8px;top:91.3px;width:320px;height:153.3px;overflow:hidden;"><svg style="left:0;top:0;width:320px;height:153.3px" viewBox="0 0 320 153" preserveAspectRatio="none">
<rect width="320" height="153" fill="url(#i10sky)"/>
<g filter="url(#b4)" fill="#7298d2"><ellipse cx="22" cy="30" rx="30" ry="9" opacity=".8" transform="rotate(-25 22 30)"/><ellipse cx="40" cy="10" rx="30" ry="5" opacity=".6" transform="rotate(-12 40 10)"/><ellipse cx="125" cy="22" rx="30" ry="9" opacity=".75" transform="rotate(18 125 22)"/><ellipse cx="175" cy="44" rx="28" ry="8" opacity=".7" transform="rotate(10 175 44)"/><ellipse cx="240" cy="22" rx="30" ry="5" opacity=".45" transform="rotate(-10 240 22)"/><ellipse cx="290" cy="46" rx="32" ry="8" opacity=".55" transform="rotate(-15 290 46)"/><ellipse cx="20" cy="52" rx="24" ry="6" opacity=".6"/></g>
<path d="M67.500 15L30 153H110z" fill="#8c96ac"/>
<path d="M67.500 15L73 153H330Q170 50 67.500 15z" fill="#a7adbb"/>
<path d="M163 55L170 52L215 153H190z" fill="#3a4254"/>
<rect x="0" y="0" width="320" height="1.500" fill="#0c2f70" opacity=".8"/>
</svg></div>
</div>
<div style="left:2375.5px;top:0;width:23.5px;height:571px;background:#f1f1f1;"></div>
<div style="left:2093px;top:571px;width:306px;height:6px;background:#fff;"></div>
<div style="left:2093px;top:572.6px;width:306px;height:1.4px;background:#d0d0d0;"></div>
<div style="left:2378.5px;top:28.5px;width:20px;height:82px;background:#c1c1c1;"></div>
<svg style="left:2383px;top:11.9px;width:11.4px;height:6.6px" viewBox="0 0 10 5" preserveAspectRatio="none"><path d="M0 5h10L5 0z" fill="#a3a3a3"/></svg>
<svg style="left:2383px;top:554.7px;width:11.6px;height:7.2px" viewBox="0 0 10 5" preserveAspectRatio="none"><path d="M0 0h10L5 5z" fill="#484848"/></svg>
</div>
</body></html>
